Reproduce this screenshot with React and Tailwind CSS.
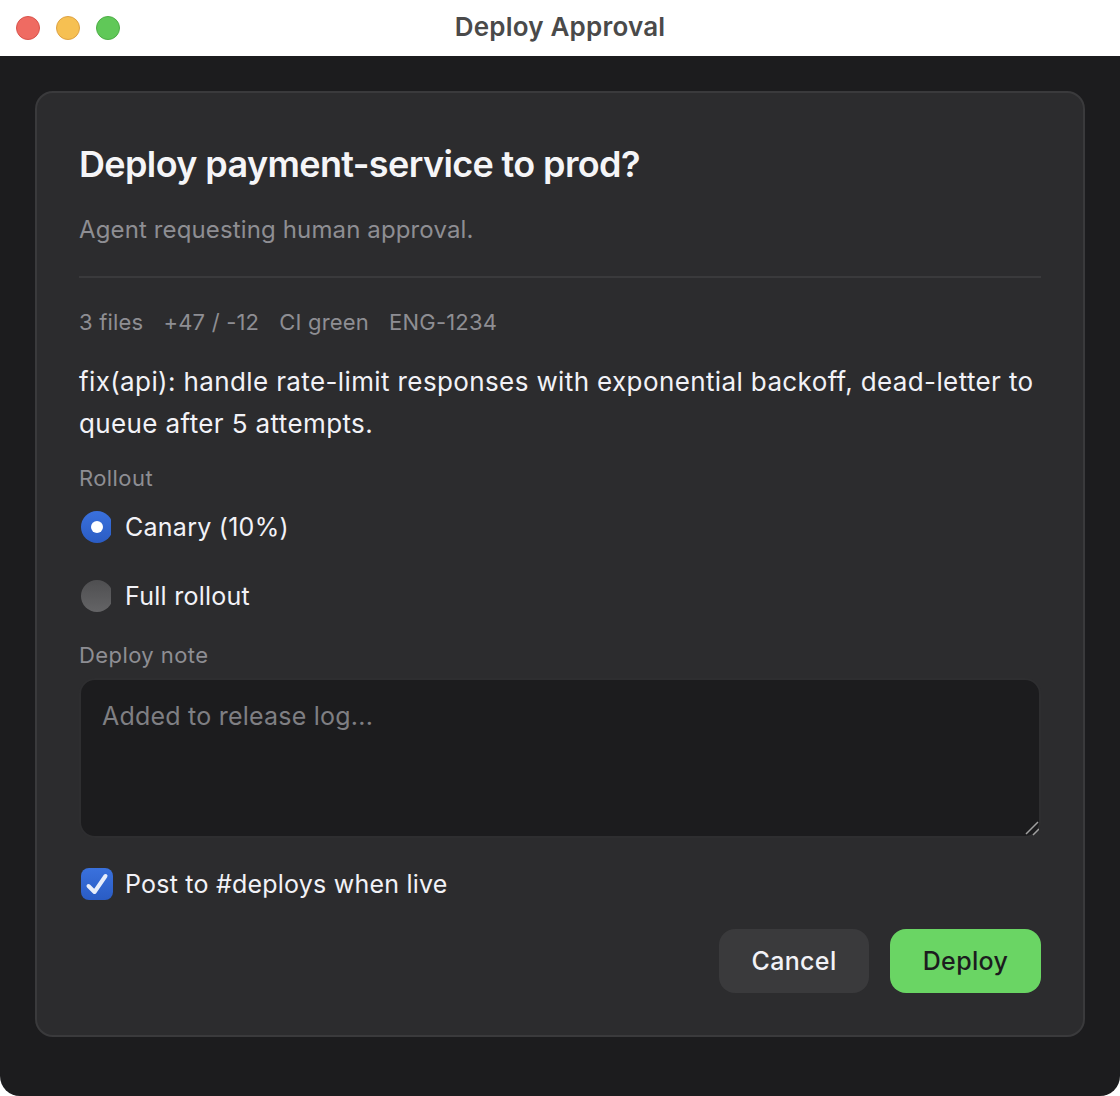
import React from "react";

function Radio({ on, label }) {
  return (
    <div className="flex items-center h-[32px] gap-[14px]">
      <div className="w-[30px] h-[32px] overflow-hidden ml-[2px] shrink-0">
        {on ? (
          <div className="w-[32px] h-[32px] rounded-full bg-gradient-to-b from-[#3a71dd] to-[#2a5cc4] flex items-center justify-center">
            <div className="w-[12px] h-[12px] rounded-full bg-white" />
          </div>
        ) : (
          <div className="w-[32px] h-[32px] rounded-full bg-gradient-to-b from-[#4f4f51] to-[#646466]" />
        )}
      </div>
      <span className="text-[25px] leading-[32px] tracking-[0.26px] text-[#f2f2f7]">{label}</span>
    </div>
  );
}

export default function App() {
  return (
    <div className="w-[1120px] h-[1096px] bg-white font-['Inter',sans-serif] overflow-hidden">
      <div className="h-[56px] relative flex items-center justify-center">
        <div className="absolute left-[16px] top-[16px] flex gap-[16px]">
          <div className="w-[24px] h-[24px] rounded-full bg-[#ef6b62] border border-[#d9534c]" />
          <div className="w-[24px] h-[24px] rounded-full bg-[#f6c052] border border-[#dea243]" />
          <div className="w-[24px] h-[24px] rounded-full bg-[#60c858] border border-[#4dae46]" />
        </div>
        <span className="text-[26px] leading-[32px] mb-[2px] font-semibold tracking-[0.2px] text-[#4a4a4a]">Deploy Approval</span>
      </div>
      <div className="h-[1040px] bg-[#1c1c1e] rounded-b-[20px] px-[35px] pt-[35px]">
        <div className="h-[946px] bg-[#2c2c2e] border-2 border-[#3a3a3c] rounded-[18px] px-[42px] pt-[45px] flex flex-col">
          <h1 className="text-[36px] leading-[52px] font-semibold text-[#f5f5f7] tracking-[-0.63px]">Deploy payment-service to prod?</h1>
          <p className="mt-[24px] text-[24px] leading-[32px] tracking-[0.13px] text-[#8e8e93]">Agent requesting human approval.</p>
          <div className="mt-[30px] h-[2px] bg-[#3a3a3c] w-[962px]" />
          <div className="mt-[29px] flex gap-[20px] text-[22px] leading-[30px] tracking-[0.2px] text-[#8e8e93]">
            <span>3 files</span><span>+47 / -12</span><span>CI green</span><span>ENG-1234</span>
          </div>
          <p className="mt-[24px] text-[26px] leading-[41.5px] tracking-[0.38px] text-[#f2f2f7] w-[962px]">fix(api): handle rate-limit responses with exponential backoff, dead-letter to queue after 5 attempts.</p>
          <div className="mt-[19px] text-[22px] leading-[30px] tracking-[0.42px] text-[#8e8e93]">Rollout</div>
          <div className="mt-[18px] flex flex-col gap-[37px]">
            <Radio on label="Canary (10%)" />
            <Radio label="Full rollout" />
          </div>
          <div className="mt-[28px] text-[22px] leading-[30px] tracking-[0.42px] text-[#8e8e93]">Deploy note</div>
          <div className="mt-[8px] w-[962px] h-[160px] relative bg-[#1c1c1e] border-2 border-[#2e2e30] rounded-[16px] px-[21px] pt-[20px] text-[25px] leading-[32px] tracking-[0.22px] text-[#7f7f83]">
            Added to release log...
            <svg className="absolute right-0 bottom-0" width="16" height="16" viewBox="0 0 16 16">
              <path d="M3 14 L15 2 M10 15 L16 9" stroke="#a0a0a0" strokeWidth="1.5" fill="none" />
            </svg>
          </div>
          <div className="mt-[30px] flex items-center gap-[12px]">
            <div className="ml-[2px] w-[32px] h-[32px] rounded-[8px] bg-gradient-to-b from-[#3a71dd] to-[#2a5cc4] flex items-center justify-center">
              <svg width="26" height="26" viewBox="0 0 26 26">
                <path d="M4.5 15 L10.5 21 L21.5 5" stroke="#e8eefb" strokeWidth="4" strokeLinecap="round" strokeLinejoin="round" fill="none" />
              </svg>
            </div>
            <span className="text-[25px] leading-[32px] tracking-[0.22px] text-[#f2f2f7]">Post to #deploys when live</span>
          </div>
          <div className="mt-[29px] w-[962px] flex justify-end gap-[21px]">
            <button className="w-[150px] h-[64px] pt-[2px] rounded-[16px] bg-[#3a3a3c] text-[25px] font-medium tracking-[0.35px] text-[#f2f2f7]">Cancel</button>
            <button className="w-[151px] h-[64px] pt-[2px] rounded-[16px] bg-[#6ad564] text-[25px] font-medium tracking-[0.35px] text-[#1c1c1e]">Deploy</button>
          </div>
        </div>
      </div>
    </div>
  );
}
